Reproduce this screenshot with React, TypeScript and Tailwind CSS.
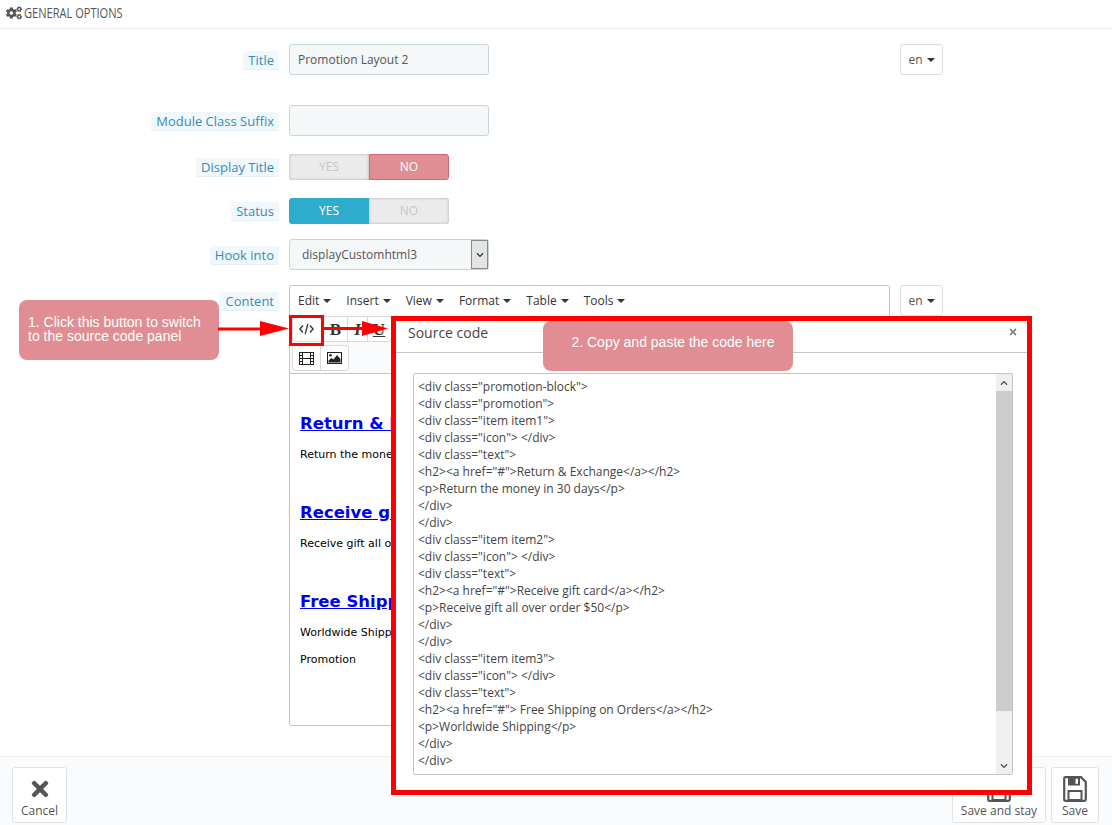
import React from "react";
import { FaCogs, FaTimes, FaChevronUp, FaChevronDown } from "react-icons/fa";

const font = "font-['Open_Sans','Noto_Sans',sans-serif]";

function Label({ children, className = "" }: { children: React.ReactNode; className?: string }) {
  return (
    <div className={`w-[279px] flex justify-end items-start shrink-0 ${className}`}>
      <span className="bg-[#f0f8fc] text-[#3a8ab4] text-[13px] leading-[18px] px-[5px] rounded-[2px] border-b border-[#e4f0f6]">{children}</span>
    </div>
  );
}

function Caret() {
  return <span className="inline-block w-0 h-0 border-l-[4px] border-r-[4px] border-t-[4px] border-l-transparent border-r-transparent border-t-[#333] ml-[4px] align-middle" />;
}

function LangBtn() {
  return (
    <div className="w-[43px] h-[31px] ml-[10px] border border-[#dfdfe3] rounded-[3px] bg-white flex items-center justify-center text-[12px] text-[#555]">
      en<Caret />
    </div>
  );
}

function Input({ value }: { value?: string }) {
  return (
    <div className="w-[200px] h-[31px] bg-[#f5f8f9] border border-[#c7d6db] rounded-[3px] flex items-center px-[8px] text-[12px] text-[#555]">{value}</div>
  );
}

function Toggle({ yes }: { yes: boolean }) {
  const off = "w-[80px] bg-[#ebebeb] text-[#c7c7c7] shadow-[inset_0_0_3px_#aaa] flex items-center justify-center";
  return (
    <div className="flex w-[160px] h-[26px] text-[12px] rounded-[3px]">
      <div className={yes ? "w-[80px] bg-[#2eacce] text-white flex items-center justify-center rounded-l-[3px]" : `${off} rounded-l-[3px]`}>YES</div>
      <div className={yes ? `${off} rounded-r-[3px]` : "w-[80px] bg-[#e08e93] border border-[#d0696f] text-white flex items-center justify-center rounded-r-[3px]"}>NO</div>
    </div>
  );
}

function MenuItem({ children }: { children: React.ReactNode }) {
  return <span className="flex items-center mr-[15px] text-[12px] text-[#333]">{children}<Caret /></span>;
}

function ToolBtn({ w, children, last }: { w: string; children: React.ReactNode; last?: boolean }) {
  return <div className={`${w} h-full flex items-center justify-center text-[#333] ${last ? "" : "border-r border-[#d9d9d9]"}`}>{children}</div>;
}

function CodeIcon() {
  return (
    <svg width="15" height="12" viewBox="0 0 15 12" fill="none" stroke="#333" strokeWidth="1.3">
      <path d="M4 2.5 L0.9 6 L4 9.5" />
      <path d="M11 2.5 L14.1 6 L11 9.5" />
      <path d="M8.8 0.8 L6.2 11.2" />
    </svg>
  );
}

function FilmIcon() {
  return (
    <svg width="15" height="13" viewBox="0 0 15 13" fill="none" stroke="#222" strokeWidth="1">
      <rect x="0.5" y="0.5" width="14" height="12" />
      <path d="M3.5 0.5 V12.5 M11.5 0.5 V12.5 M3.5 6.5 H11.5 M0.5 3.5 H3.5 M0.5 6.5 H3.5 M0.5 9.5 H3.5 M11.5 3.5 H14.5 M11.5 6.5 H14.5 M11.5 9.5 H14.5" />
    </svg>
  );
}

function ImageIcon() {
  return (
    <svg width="15" height="12" viewBox="0 0 15 12">
      <rect x="0.5" y="0.5" width="14" height="11" fill="#fff" stroke="#222" />
      <path d="M1.5 10.5 L1.5 8.5 L4.5 6 L6.5 7.5 L10 3 L13.5 7 L13.5 10.5 Z" fill="#222" />
      <circle cx="3.5" cy="3.2" r="1.3" fill="#222" />
    </svg>
  );
}

function SaveIcon() {
  return (
    <svg width="24" height="26" viewBox="0 0 24 26">
      <path d="M2.5 1.2 H18 L22.8 6 V23.5 Q22.8 24.8 21.5 24.8 H2.5 Q1.2 24.8 1.2 23.5 V2.5 Q1.2 1.2 2.5 1.2 Z" fill="none" stroke="#555" strokeWidth="2.2" />
      <path d="M5 1.5 H17 V9.5 H5 Z" fill="#555" />
      <rect x="12.5" y="2.8" width="2.5" height="5" fill="#fff" />
      <rect x="5.5" y="15" width="13" height="9" fill="none" stroke="#555" strokeWidth="2" />
    </svg>
  );
}

function Row({ className, label, labelClass, children }: { className: string; label: string; labelClass?: string; children: React.ReactNode }) {
  return (
    <div className={`flex items-center ${className}`}>
      <Label className={labelClass}>{label}</Label>
      <div className="ml-[10px] flex items-center">{children}</div>
    </div>
  );
}

function H({ children }: { children: React.ReactNode }) {
  return <a className="block font-['DejaVu_Sans',sans-serif] font-bold text-[16.5px] leading-[20px] text-[#0000ee] underline whitespace-nowrap">{children}</a>;
}

function P({ children, className }: { children: React.ReactNode; className: string }) {
  return <p className={`font-['DejaVu_Sans',sans-serif] text-[11px] leading-[14px] text-black whitespace-nowrap ${className}`}>{children}</p>;
}

const code = [
  '<div class="promotion-block">',
  '<div class="promotion">',
  '<div class="item item1">',
  '<div class="icon"> </div>',
  '<div class="text">',
  '<h2><a href="#">Return & Exchange</a></h2>',
  "<p>Return the money in 30 days</p>",
  "</div>",
  "</div>",
  '<div class="item item2">',
  '<div class="icon"> </div>',
  '<div class="text">',
  '<h2><a href="#">Receive gift card</a></h2>',
  "<p>Receive gift all over order $50</p>",
  "</div>",
  "</div>",
  '<div class="item item3">',
  '<div class="icon"> </div>',
  '<div class="text">',
  '<h2><a href="#"> Free Shipping on Orders</a></h2>',
  "<p>Worldwide Shipping</p>",
  "</div>",
  "</div>",
];

function FootBtn({ w, icon, label }: { w: string; icon: React.ReactNode; label: string }) {
  return (
    <div className={`${w} h-[56px] bg-white border border-[#dfe3e6] rounded-[3px] flex flex-col items-center text-[12px] text-[#555] pt-[8px]`}>
      <div className="h-[26px] flex items-center justify-center">{icon}</div>
      <div className="leading-[16px] mt-[1px] whitespace-nowrap">{label}</div>
    </div>
  );
}

export default function App() {
  return (
    <div className={`relative w-[1112px] h-[825px] overflow-hidden bg-white flex flex-col ${font}`}>
      <div className="h-[29px] shrink-0 border-b border-[#eeeeee] flex items-center pl-[6px] pb-[2px] text-[#555]">
        <FaCogs className="text-[16px] text-[#555]" />
        <span className="ml-[2px] mb-[1px] text-[14px] inline-block origin-left scale-x-[0.79] whitespace-nowrap">GENERAL OPTIONS</span>
      </div>

      <div className="flex-1">
        <Row className="mt-[15px]" labelClass="mt-[1px]" label="Title">
          <Input value="Promotion Layout 2" />
          <div className="ml-[401px] flex"><LangBtn /></div>
        </Row>
        <Row className="mt-[30px]" labelClass="mt-[1px]" label="Module Class Suffix"><Input /></Row>
        <Row className="mt-[18px]" label="Display Title"><Toggle yes={false} /></Row>
        <Row className="mt-[18px]" label="Status"><Toggle yes={true} /></Row>
        <Row className="mt-[15px]" labelClass="mt-[1px]" label="Hook into">
          <div className="w-[200px] h-[31px] bg-[#f5f8f9] border border-[#c7d6db] rounded-[3px] flex items-center justify-between text-[12px] text-[#555]">
            <span className="pl-[12px] pt-[1px]">displayCustomhtml3</span>
            <div className="w-[17px] h-[29px] bg-[#e4e4e4] border border-[#8a8a8a] flex items-center justify-center">
              <FaChevronDown className="text-[8px] text-[#333]" />
            </div>
          </div>
        </Row>

        <div className="flex items-start mt-[15px]">
          <Label className="pt-[7px]">Content</Label>
          <div className="ml-[10px] w-[601px] h-[441px] border border-[#c5c5c5] rounded-[2px] flex flex-col">
            <div className="h-[28px] shrink-0 flex items-center pl-[8px] pt-[1px] bg-white">
              <MenuItem>Edit</MenuItem>
              <MenuItem>Insert</MenuItem>
              <MenuItem>View</MenuItem>
              <MenuItem>Format</MenuItem>
              <MenuItem>Table</MenuItem>
              <MenuItem>Tools</MenuItem>
            </div>
            <div className="h-[60px] shrink-0 border-b border-[#c5c5c5] bg-[#fafbfc] pl-[2px] pt-[2px]">
              <div className="flex h-[26px] w-[100px] border border-[#d9d9d9] rounded-[3px] bg-white">
                <ToolBtn w="w-[31px]"><span className="pr-[3px] flex"><CodeIcon /></span></ToolBtn>
                <ToolBtn w="w-[24px]"><span className="font-['Liberation_Serif',serif] font-bold text-[17px] leading-none">B</span></ToolBtn>
                <ToolBtn w="w-[20px]"><span className="font-['Liberation_Serif',serif] font-bold italic text-[17px] leading-none">I</span></ToolBtn>
                <ToolBtn w="w-[22px]" last><span className="font-['Liberation_Serif',serif] font-bold underline text-[17px] leading-none">U</span></ToolBtn>
              </div>
              <div className="flex h-[26px] w-[57px] mt-[3px] border border-[#d9d9d9] rounded-[3px] bg-white">
                <ToolBtn w="w-[28px]"><FilmIcon /></ToolBtn>
                <ToolBtn w="w-[27px]" last><ImageIcon /></ToolBtn>
              </div>
            </div>
            <div className="flex-1 pl-[10px] overflow-hidden">
              <div className="mt-[40px]"><H>Return &amp; Exchange</H></div>
              <P className="mt-[14px]">Return the money in 30 days</P>
              <div className="mt-[41px]"><H>Receive gift card</H></div>
              <P className="mt-[14px]">Receive gift all over order $50</P>
              <div className="mt-[41px]"><H>Free Shipping on Orders</H></div>
              <P className="mt-[14px]">Worldwide Shipping</P>
              <P className="mt-[13px]">Promotion</P>
            </div>
          </div>
          <LangBtn />
        </div>
      </div>

      <div className="h-[69px] shrink-0 border-t border-[#eeeeee] bg-[#fafbfc] flex items-start justify-between pl-[12px] pr-[13px] pt-[10px]">
        <FootBtn w="w-[55px]" icon={<FaTimes className="text-[24px] text-[#555]" />} label="Cancel" />
        <div className="flex gap-[5px]">
          <FootBtn w="w-[94px]" icon={<SaveIcon />} label="Save and stay" />
          <FootBtn w="w-[48px]" icon={<SaveIcon />} label="Save" />
        </div>
      </div>

      {/* Source code dialog, over the page */}
      <div className="absolute left-[391px] top-[316px] w-[641px] h-[479px] border-[5px] border-[#ff0000] bg-white flex flex-col">
        <div className="h-[32px] shrink-0 border-b border-[#c5c5c5] flex items-center justify-between pl-[12px] pr-[9px] pb-[9px] text-[14px] text-[#444]">
          <span>Source code</span>
          <FaTimes className="text-[10px] text-[#858585]" />
        </div>
        <div className="mx-[17px] mt-[20px] w-[600px] h-[402px] border border-[#c5c5c5] rounded-[2px] flex">
          <div className="flex-1 pl-[4px] pt-[4px] text-[12px] leading-[17px] text-[#444] whitespace-pre overflow-hidden">
            {code.map((l, i) => <div key={i}>{l}</div>)}
          </div>
          <div className="w-[16px] bg-[#efefef] flex flex-col">
            <div className="h-[17px] flex items-center justify-center"><FaChevronUp className="text-[8px] text-[#505050]" /></div>
            <div className="h-[320px] bg-[#cdcdcd]" />
            <div className="flex-1" />
            <div className="h-[17px] flex items-center justify-center"><FaChevronDown className="text-[8px] text-[#505050]" /></div>
          </div>
        </div>
      </div>

      {/* Annotations */}
      <div className="absolute left-[19px] top-[300px] w-[200px] h-[60px] bg-[#e08e93] rounded-[8px] text-white text-[14px] leading-[14px] pl-[9px] pt-[15px] font-['Liberation_Sans',sans-serif]">
        <div>1. Click this button to switch</div>
        <div>to the source code panel</div>
      </div>
      <div className="absolute left-[543px] top-[321px] w-[250px] h-[50px] bg-[#e08e93] rounded-[8px] text-white text-[14px] flex items-center justify-center pl-[10px] pb-[8px] font-['Liberation_Sans',sans-serif]">
        2. Copy and paste the code here
      </div>
      <div className="absolute left-[289px] top-[315px] w-[35px] h-[31px] border-[3px] border-[#ff0000]" />
      <svg className="absolute left-0 top-0 pointer-events-none" width="1112" height="825">
        <rect x="218" y="327.5" width="44" height="3" fill="#ff0000" />
        <polygon points="260,321 289,328.5 260,336" fill="#ff0000" />
        <rect x="323" y="327" width="41" height="3" fill="#ff0000" />
        <polygon points="362,321 388,328.5 362,336" fill="#ff0000" />
      </svg>
    </div>
  );
}
